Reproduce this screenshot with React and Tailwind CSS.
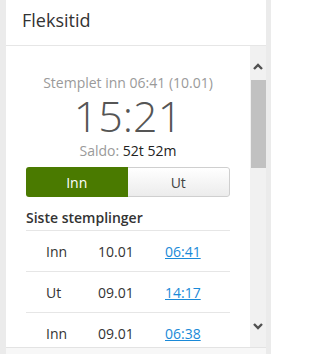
import React from 'react';

const rows = [
  { type: 'Inn', date: '10.01', time: '06:41' },
  { type: 'Ut', date: '09.01', time: '14:17' },
  { type: 'Inn', date: '09.01', time: '06:38' },
];

function ScrollBar() {
  return (
    <div className="w-[16px] shrink-0 bg-[#f1f1f1] flex flex-col items-center">
      <svg width="12" height="10" viewBox="0 0 12 10" className="mt-[15px]">
        <path d="M2 8 L6 4 L10 8" stroke="#505050" strokeWidth="2.4" fill="none" />
      </svg>
      <div className="mt-[9px] w-[15px] h-[88px] ml-[1px] bg-[#c1c1c1]" />
      <div className="flex-1" />
      <svg width="12" height="10" viewBox="0 0 12 10" className="mb-[15px]">
        <path d="M2 2 L6 6 L10 2" stroke="#505050" strokeWidth="2.4" fill="none" />
      </svg>
    </div>
  );
}

export default function App() {
  return (
    <div
      className="w-[271px] h-[354px] bg-[#ebebeb] flex flex-col overflow-hidden"
      style={{ fontFamily: '"Open Sans", sans-serif' }}
    >
      <div className="flex-1 min-h-0 flex flex-col ml-[6px] mr-[5px] bg-white">
        <div className="h-[46px] shrink-0 border-b border-[#e6e6e6] px-[16px] pt-[7px] text-[18px] text-[#333]">
          Fleksitid
        </div>
        <div className="flex-1 min-h-0 flex">
          <div className="flex-1 overflow-hidden px-[20px] pt-[27px] text-center">
            <div className="text-[14px] leading-[20px] text-[#9a9a9a]">Stemplet inn 06:41 (10.01)</div>
            <div className="text-[43px] leading-[46px] font-light text-[#555]">15:21</div>
            <div className="text-[14px] leading-[20px] mt-[2px]">
              <span className="text-[#9a9a9a]">Saldo: </span>
              <span className="text-[#222]">52t 52m</span>
            </div>
            <div className="mt-[6px] flex h-[30px] rounded-[3px] overflow-hidden text-[14px]">
              <button className="flex-1 bg-[#4a7a00] text-white">Inn</button>
              <button className="flex-1 bg-gradient-to-b from-[#ffffff] to-[#ececec] text-[#444] border border-l-0 border-[#cfcfcf] rounded-r-[3px]">
                Ut
              </button>
            </div>
            <div className="mt-[10px] pb-[2px] text-left text-[14px] font-semibold text-[#333] border-b border-[#e6e6e6]">
              Siste stemplinger
            </div>
            {rows.map((r, i) => (
              <div key={i} className="flex items-center h-[41px] border-b border-[#e6e6e6] text-[14px] text-[#333] text-left">
                <div className="w-[72px] pl-[20px]">{r.type}</div>
                <div className="w-[67px]">{r.date}</div>
                <a href="#" className="text-[#1a8ad8] underline">{r.time}</a>
              </div>
            ))}
          </div>
          <ScrollBar />
        </div>
      </div>
      <div className="h-[7px] shrink-0 ml-[6px] mr-[5px] border-t border-[#e3e3e3] bg-[#f7f7f7]" />
    </div>
  );
}
